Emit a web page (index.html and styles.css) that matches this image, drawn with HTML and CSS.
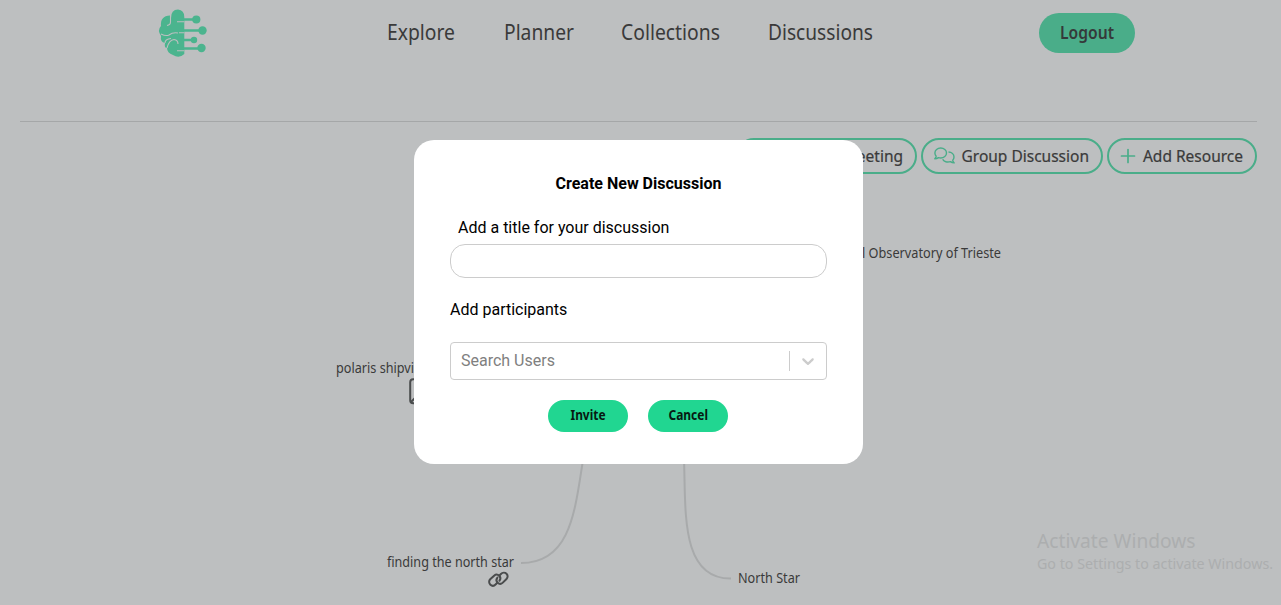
FILE: index.html
```html
<!DOCTYPE html>
<html lang="en">
<head>
<meta charset="utf-8">
<title>Discussions</title>
<link rel="stylesheet" href="styles.css">
</head>
<body>
<div class="page">
  <header class="header">
    <svg class="logo" width="50" height="50" viewBox="0 0 50 50" aria-hidden="true">
      <g fill="#4bb48e">
        <path d="M13 16V9Q13 .5 20 .5Q26.300 1 26.300 8V45Q21 50 15 46Q9 44 9 39Q6 39 7 34Q2 33 3 27Q-1 21 3 17Q2 7 12 6.500Z"/>
        <circle cx="38.300" cy="10.500" r="4.100"/><circle cx="44.500" cy="21.500" r="4.200"/><circle cx="36" cy="31" r="3.200"/><circle cx="43.500" cy="39" r="4.200"/>
      </g>
      <g fill="none" stroke="#4bb48e" stroke-width="2.600"><path d="M24 10.500H38M24 21.500H44M24 31H36M24 39.500H43"/></g>
      <g fill="none" stroke="#bdbfc0" stroke-width="1.100"><path d="M12.500 7V13Q12.500 16 9 16.500M19 12.700H26M3 25Q8 27.500 11 26Q15 23 20 24M7 34Q7 30 13 29.500M9 39Q11 31 16 30.500Q20 31 20 35M21 23.700H26M19 41.700H26"/></g>
    </svg>
    <nav class="nav">
      <a><svg width="69" height="40"><text x="0" y="31" textLength="68" lengthAdjust="spacingAndGlyphs">Explore</text></svg></a>
      <a><svg width="70" height="40"><text x="0" y="31" textLength="70" lengthAdjust="spacingAndGlyphs">Planner</text></svg></a>
      <a><svg width="99" height="40"><text x="0" y="31" textLength="99" lengthAdjust="spacingAndGlyphs">Collections</text></svg></a>
      <a><svg width="105" height="40"><text x="0" y="31" textLength="105" lengthAdjust="spacingAndGlyphs">Discussions</text></svg></a>
    </nav>
    <button class="logout"><svg width="54" height="40"><text x="0" y="26" textLength="54" lengthAdjust="spacingAndGlyphs">Logout</text></svg></button>
  </header>

  <div class="toolbar">
    <button class="pill pill-meeting"><span>Meeting</span></button>
    <button class="pill pill-group">
      <svg width="21" height="18" viewBox="0 0 21 18" fill="none" stroke="#4aad89" stroke-width="1.400" stroke-linejoin="round">
        <path d="M6.700 1C3.400 1 .9 3.200 .9 6C.9 7.300 1.400 8.400 2.200 9.200C2 10.200 1.500 11 .8 11.800C2.300 11.800 3.600 11.300 4.500 10.600C5.200 10.800 5.900 11 6.700 11C10 11 12.500 8.800 12.500 6S10 1 6.700 1Z"/>
        <path d="M14.500 5C17.700 5.100 20 7.300 20 10C20 11.200 19.500 12.400 18.700 13.200C18.900 14.200 19.400 15 20.200 15.900C18.700 15.900 17.400 15.400 16.400 14.600C13.300 15.600 9.700 14.700 8.700 12.300"/>
      </svg>
      <span>Group Discussion</span>
    </button>
    <button class="pill pill-add">
      <svg width="14" height="14" viewBox="0 0 14 14"><path d="M7 .5V13.500M.5 7H13.500" stroke="#4aad89" stroke-width="1.700" stroke-linecap="round"/></svg>
      <span>Add Resource</span>
    </button>
  </div>

  <svg class="map" width="1281" height="605" viewBox="0 0 1281 605">
    <g class="edges">
      <path d="M583 460C575 510 571 563 521 563"/>
      <path d="M684 460C686 510 680 579 731 578.500"/>
    </g>
    <text x="862" y="258" textLength="139" lengthAdjust="spacingAndGlyphs">l Observatory of Trieste</text>
    <text x="336" y="373" textLength="78" lengthAdjust="spacingAndGlyphs">polaris shipvi</text>
    <text x="387" y="567" textLength="127" lengthAdjust="spacingAndGlyphs">finding the north star</text>
    <text x="738" y="583" textLength="62" lengthAdjust="spacingAndGlyphs">North Star</text>
    <g class="icon">
      <rect x="410.200" y="379.200" width="22" height="24" rx="3"/>
      <path d="M411 402L417 396"/>
    </g>
    <g class="icon" transform="translate(488 571.500)">
      <path d="M9.300 11.200L7.800 12.800C6.200 14.500 3.900 14.600 2.400 13.200C.8 11.700 .7 9.400 2.200 7.800L6.100 4.200C7.700 2.800 9.800 2.900 11.200 4.300C12.600 5.700 12.600 7.800 11.400 9.300"/>
      <path d="M11.500 4L12.900 2.500C14.500 .8 17 .8 18.500 2.200C20 3.700 20 6 18.500 7.500L14.800 11.100C13.200 12.600 11 12.500 9.600 11.100C8.200 9.700 8.100 7.700 9.400 6.100"/>
    </g>
  </svg>

  <aside class="activate">
    <div class="activate-title">Activate Windows</div>
    <div class="activate-text">Go to Settings to activate Windows.</div>
  </aside>

  <section class="modal">
    <h2 class="modal-title">Create New Discussion</h2>
    <label class="title-label" for="title">Add a title for your discussion</label>
    <input class="title-input" id="title" type="text">
    <div class="people-label">Add participants</div>
    <div class="select">
      <span class="placeholder">Search Users</span>
      <span class="separator"></span>
      <svg class="chevron" width="20" height="20" viewBox="0 0 20 20" fill="#ccc"><path d="M4.516 7.548c0.436-0.446 1.043-0.481 1.576 0l3.908 3.747 3.908-3.747c0.533-0.481 1.141-0.446 1.574 0 0.436 0.445 0.408 1.197 0 1.615-0.406 0.418-4.695 4.502-4.695 4.502-0.217 0.223-0.502 0.335-0.787 0.335s-0.570-0.112-0.789-0.335c0 0-4.287-4.084-4.695-4.502s-0.436-1.170 0-1.615z"/></svg>
    </div>
    <div class="actions">
      <button class="action"><svg width="35" height="32"><text x="0.500" y="20" textLength="35" lengthAdjust="spacingAndGlyphs">Invite</text></svg></button>
      <button class="action"><svg width="40" height="32"><text x="0.500" y="20" textLength="39.500" lengthAdjust="spacingAndGlyphs">Cancel</text></svg></button>
    </div>
  </section>
</div>
</body>
</html>
```
FILE: styles.css
```css
* { box-sizing: border-box; }
body { margin: 0; }
button { border: 0; padding: 0; margin: 0; }
svg { display: block; flex: none; overflow: visible; }
.page {
  position: relative;
  width: 1281px;
  height: 605px;
  overflow: hidden;
  background: #bdbfc0;
  color: #3a3a3a;
  font-family: "Noto Sans", sans-serif;
}
.header {
  display: flex;
  align-items: flex-start;
  height: 122px;
  margin: 0 24px 0 20px;
  padding: 9px 122px 0 138px;
  border-bottom: 1px solid #a5a7a8;
}
.nav { display: flex; gap: 47.700px; margin-left: 179px; }
.nav text, .map text, .logout text, .action text { font-stretch: condensed; }
.nav text { font-size: 22px; fill: #3a3a3a; }
.logout {
  display: flex;
  justify-content: center;
  width: 96px;
  height: 40px;
  margin: 4px 0 0 auto;
  border-radius: 20px;
  background: #4aad89;
}
.logout text { font: 600 18px "Noto Sans", sans-serif; font-stretch: condensed; fill: #35393a; }
.toolbar {
  display: flex;
  justify-content: flex-end;
  gap: 4px;
  padding: 16px 24px 0 0;
}
.pill {
  display: flex;
  align-items: center;
  justify-content: flex-end;
  height: 36px;
  padding: 0 12px;
  border: 2px solid #4aad89;
  border-radius: 18px;
  background: none;
  color: #3a3a3a;
  font: 400 15.500px "Noto Sans", sans-serif;
  -webkit-text-stroke: 0.200px #3a3a3a;
  white-space: nowrap;
}
.pill-meeting { width: 181px; }
.pill-group { width: 182px; gap: 7px; }
.pill-add { width: 150px; gap: 8px; }
.map { position: absolute; top: 0; left: 0; pointer-events: none; }
.map text { font-size: 14px; fill: #3a3a3a; }
.edges { fill: none; stroke: #a8aaab; stroke-width: 2; }
.icon { fill: none; stroke: #4a4c4d; stroke-width: 2; stroke-linecap: round; }
.activate { position: absolute; left: 1037px; top: 527px; color: #acaeaf; white-space: nowrap; }
.activate-title { font-size: 19.200px; line-height: 28px; }
.activate-text { font-size: 14.250px; line-height: 18px; }
.modal {
  position: absolute;
  left: 414px;
  top: 140px;
  width: 449px;
  height: 324px;
  display: flex;
  flex-direction: column;
  padding: 34px 36px 0;
  border-radius: 20px;
  background: #fff;
  color: #000;
  font: 16px/19px Roboto, sans-serif;
}
.modal-title { margin: 0; font-size: 16px; font-weight: 700; text-align: center; }
.title-label { margin: 25px 0 7px 8px; }
.title-input {
  width: 377px;
  height: 34px;
  border: 1px solid #ccc;
  border-radius: 15px;
  outline: 0;
}
.people-label { margin-top: 22px; }
.select {
  display: flex;
  align-items: center;
  height: 38px;
  margin-top: 23px;
  padding: 0 8px 0 10px;
  border: 1px solid #ccc;
  border-radius: 4px;
}
.placeholder { flex: 1; padding-bottom: 2px; color: #808080; }
.separator { width: 1px; height: 20px; margin-right: 8px; background: #ccc; }
.actions { display: flex; justify-content: center; gap: 20px; margin: 20px 1px 0 0; padding-right: 1px; }
.action {
  display: flex;
  justify-content: center;
  width: 80px;
  height: 32px;
  border-radius: 16px;
  background: #21d691;
}
.action text { font: 700 14.500px "Noto Sans", sans-serif; font-stretch: condensed; fill: #071a12; }
```
